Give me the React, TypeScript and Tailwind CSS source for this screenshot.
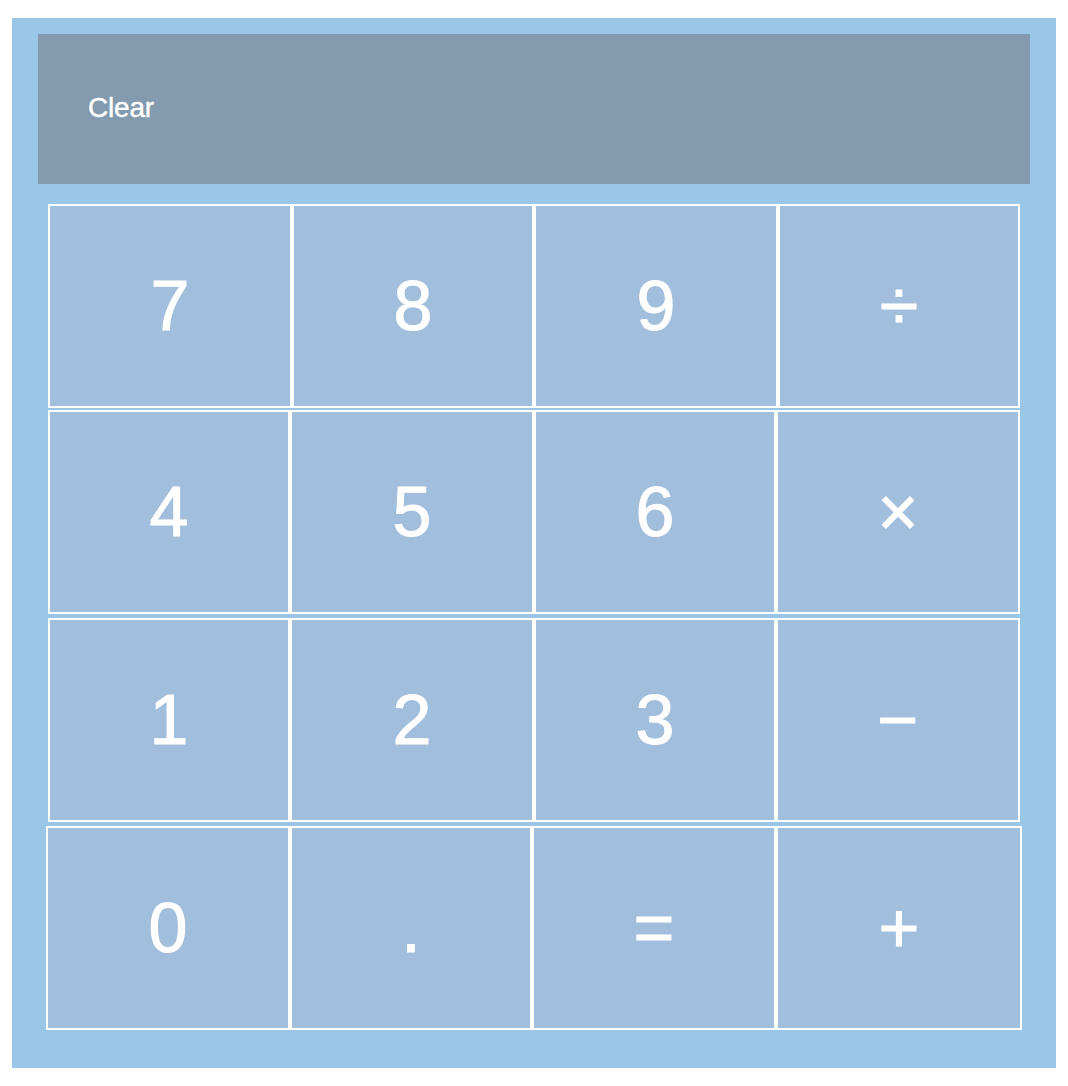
const rows: { keys: string[]; widths: number[]; offset: string; gap: string }[] = [
  { keys: ['7', '8', '9', '÷'], widths: [244, 242, 244, 242], offset: 'ml-[10px]', gap: 'mt-0' },
  { keys: ['4', '5', '6', '×'], widths: [242, 244, 242, 244], offset: 'ml-[10px]', gap: 'mt-[2px]' },
  { keys: ['1', '2', '3', '−'], widths: [242, 244, 242, 244], offset: 'ml-[10px]', gap: 'mt-[4px]' },
  { keys: ['0', '.', '=', '+'], widths: [244, 242, 244, 246], offset: 'ml-[8px]', gap: 'mt-[4px]' },
];

const Key = ({ label, width }: { label: string; width: number }) => (
  <button
    className="h-[204px] shrink-0 border-2 border-white bg-[#a1bedc] text-[70px] leading-none text-white [-webkit-text-stroke:1px_white] flex items-center justify-center"
    style={{ width }}
  >
    {label}
  </button>
);

export default function App() {
  return (
    <div className="min-h-[1086px] bg-white pt-[18px] pl-[12px]" style={{ fontFamily: '"Liberation Sans", Arial, sans-serif' }}>
      <div className="w-[1044px] h-[1050px] bg-[#9ac7e7] pt-[16px] px-[26px]">
        <div className="h-[150px] bg-[#839aaf] flex items-center pl-[50px] pb-[2px]">
          <span className="text-[28px] text-white tracking-[-0.2px] [-webkit-text-stroke:0.4px_white]">Clear</span>
        </div>
        <div className="mt-[20px] flex flex-col">
          {rows.map((row, i) => (
            <div key={i} className={`flex ${row.offset} ${row.gap}`}>
              {row.keys.map((k, j) => (
                <Key key={k} label={k} width={row.widths[j]} />
              ))}
            </div>
          ))}
        </div>
      </div>
    </div>
  );
}
